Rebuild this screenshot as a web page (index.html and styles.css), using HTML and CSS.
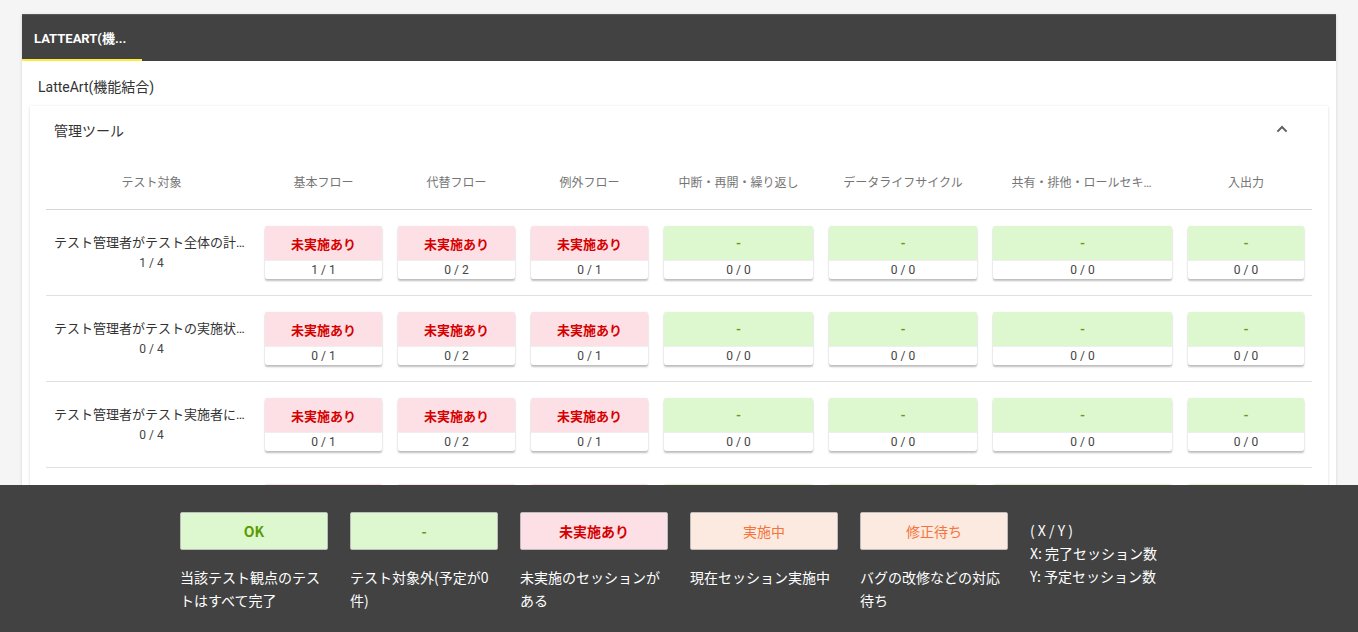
FILE: index.html
```html
<!DOCTYPE html>
<html lang="ja">
<head>
<meta charset="utf-8">
<title>LatteArt</title>
<link rel="stylesheet" href="styles.css">
</head>
<body>
<div class="page">
  <div class="card">
    <div class="tabbar">
      <div class="tab active">LATTEART(機...</div>
    </div>
    <div class="card-body">
      <div class="project-title">LatteArt(機能結合)</div>
      <div class="panel">
        <div class="panel-header">
          <span class="panel-title">管理ツール</span>
          <svg class="chevron" width="24" height="24" viewBox="0 0 24 24"><path d="M7.4 14.6 12 10l4.6 4.6" fill="none" stroke="#616161" stroke-width="2"/></svg>
        </div>
        <div class="table">
          <div class="row head">
            <div class="hcell"><span>テスト対象</span></div>
            <div class="hcell"><span>基本フロー</span></div>
            <div class="hcell"><span>代替フロー</span></div>
            <div class="hcell"><span>例外フロー</span></div>
            <div class="hcell"><span>中断・再開・繰り返し</span></div>
            <div class="hcell"><span>データライフサイクル</span></div>
            <div class="hcell"><span class="clip">共有・排他・ロールセキュリティ</span></div>
            <div class="hcell"><span>入出力</span></div>
          </div>

          <div class="row">
            <div class="title-cell"><div class="title">テスト管理者がテスト全体の計画を立てる</div><div class="count">1 / 4</div></div>
            <div class="cell"><div class="box"><div class="status ng">未実施あり</div><div class="ratio">1 / 1</div></div></div>
            <div class="cell"><div class="box"><div class="status ng">未実施あり</div><div class="ratio">0 / 2</div></div></div>
            <div class="cell"><div class="box"><div class="status ng">未実施あり</div><div class="ratio">0 / 1</div></div></div>
            <div class="cell"><div class="box"><div class="status na">-</div><div class="ratio">0 / 0</div></div></div>
            <div class="cell"><div class="box"><div class="status na">-</div><div class="ratio">0 / 0</div></div></div>
            <div class="cell"><div class="box"><div class="status na">-</div><div class="ratio">0 / 0</div></div></div>
            <div class="cell"><div class="box"><div class="status na">-</div><div class="ratio">0 / 0</div></div></div>
          </div>

          <div class="row">
            <div class="title-cell"><div class="title">テスト管理者がテストの実施状況を確認する</div><div class="count">0 / 4</div></div>
            <div class="cell"><div class="box"><div class="status ng">未実施あり</div><div class="ratio">0 / 1</div></div></div>
            <div class="cell"><div class="box"><div class="status ng">未実施あり</div><div class="ratio">0 / 2</div></div></div>
            <div class="cell"><div class="box"><div class="status ng">未実施あり</div><div class="ratio">0 / 1</div></div></div>
            <div class="cell"><div class="box"><div class="status na">-</div><div class="ratio">0 / 0</div></div></div>
            <div class="cell"><div class="box"><div class="status na">-</div><div class="ratio">0 / 0</div></div></div>
            <div class="cell"><div class="box"><div class="status na">-</div><div class="ratio">0 / 0</div></div></div>
            <div class="cell"><div class="box"><div class="status na">-</div><div class="ratio">0 / 0</div></div></div>
          </div>

          <div class="row">
            <div class="title-cell"><div class="title">テスト管理者がテスト実施者にテストを割り当てる</div><div class="count">0 / 4</div></div>
            <div class="cell"><div class="box"><div class="status ng">未実施あり</div><div class="ratio">0 / 1</div></div></div>
            <div class="cell"><div class="box"><div class="status ng">未実施あり</div><div class="ratio">0 / 2</div></div></div>
            <div class="cell"><div class="box"><div class="status ng">未実施あり</div><div class="ratio">0 / 1</div></div></div>
            <div class="cell"><div class="box"><div class="status na">-</div><div class="ratio">0 / 0</div></div></div>
            <div class="cell"><div class="box"><div class="status na">-</div><div class="ratio">0 / 0</div></div></div>
            <div class="cell"><div class="box"><div class="status na">-</div><div class="ratio">0 / 0</div></div></div>
            <div class="cell"><div class="box"><div class="status na">-</div><div class="ratio">0 / 0</div></div></div>
          </div>

          <div class="row">
            <div class="title-cell"><div class="title">テスト実施者がテストを実施する</div><div class="count">0 / 4</div></div>
            <div class="cell"><div class="box"><div class="status ng">未実施あり</div><div class="ratio">0 / 1</div></div></div>
            <div class="cell"><div class="box"><div class="status ng">未実施あり</div><div class="ratio">0 / 2</div></div></div>
            <div class="cell"><div class="box"><div class="status ng">未実施あり</div><div class="ratio">0 / 1</div></div></div>
            <div class="cell"><div class="box"><div class="status na">-</div><div class="ratio">0 / 0</div></div></div>
            <div class="cell"><div class="box"><div class="status na">-</div><div class="ratio">0 / 0</div></div></div>
            <div class="cell"><div class="box"><div class="status na">-</div><div class="ratio">0 / 0</div></div></div>
            <div class="cell"><div class="box"><div class="status na">-</div><div class="ratio">0 / 0</div></div></div>
          </div>
        </div>
      </div>
    </div>
  </div>
</div>

<footer class="legend">
  <div class="legend-item">
    <div class="legend-box ok">OK</div>
    <div class="legend-desc">当該テスト観点のテストはすべて完了</div>
  </div>
  <div class="legend-item">
    <div class="legend-box na">-</div>
    <div class="legend-desc">テスト対象外(予定が0件)</div>
  </div>
  <div class="legend-item">
    <div class="legend-box ng">未実施あり</div>
    <div class="legend-desc">未実施のセッションがある</div>
  </div>
  <div class="legend-item">
    <div class="legend-box doing">実施中</div>
    <div class="legend-desc">現在セッション実施中</div>
  </div>
  <div class="legend-item">
    <div class="legend-box doing">修正待ち</div>
    <div class="legend-desc">バグの改修などの対応待ち</div>
  </div>
  <div class="legend-note">
    <div>( X / Y )</div>
    <div>X: 完了セッション数</div>
    <div>Y: 予定セッション数</div>
  </div>
</footer>
</body>
</html>
```

FILE: styles.css
```css
* { box-sizing: border-box; }

html, body {
  margin: 0;
  padding: 0;
}

body {
  background: #f5f5f5;
  font-family: Roboto, "Noto Sans CJK JP", sans-serif;
  color: #333;
  overflow: hidden;
}

.page {
  padding: 14px 22px 0 22px;
}

.card {
  background: #fff;
  box-shadow: 0 1px 3px rgba(0,0,0,0.15);
  min-height: 700px;
}

.tabbar {
  height: 47px;
  background: #424242;
  display: flex;
  border-top: 1px solid #5a5a5a;
}

.tab {
  width: 120px;
  color: #fff;
  font-weight: 700;
  font-size: 13px;
  display: flex;
  align-items: center;
  padding-left: 12px;
  padding-top: 1px;
  border-bottom: 2px solid transparent;
}

.tab.active {
  border-bottom-color: #ffeb3b;
}

.card-body {
  padding: 0 8px;
}

.project-title {
  font-size: 14px;
  padding: 15px 8px 0 8px;
  height: 45px;
  color: #333;
}

.panel {
  background: #fff;
  box-shadow: 0 1px 3px rgba(0,0,0,0.12), 0 0 1px rgba(0,0,0,0.08);
  padding: 0 16px 40px 16px;
}

.panel-header {
  height: 48px;
  display: flex;
  align-items: center;
  justify-content: space-between;
  padding: 0 18px 0 8px;
}

.panel-title {
  font-size: 14px;
  color: #333;
}

.chevron {
  display: block;
  margin-top: -2px;
}

.row {
  display: grid;
  grid-template-columns: 211px 133px 133px 133px 165px 164px 195px 132px;
  border-bottom: 1px solid #e0e0e0;
}

.row.head {
  height: 56px;
  border-bottom: 1px solid #d6d6d6;
}

.hcell {
  display: flex;
  align-items: center;
  justify-content: center;
  font-size: 12px;
  color: #757575;
  padding: 0 8px;
  min-width: 0;
}

.hcell span {
  white-space: nowrap;
  overflow: hidden;
  text-overflow: ellipsis;
}

.hcell .clip {
  max-width: 142px;
}

.title-cell {
  padding: 23px 8px 0 8px;
  text-align: center;
  min-width: 0;
}

.title {
  font-size: 13px;
  color: #333;
  white-space: nowrap;
  overflow: hidden;
  text-overflow: ellipsis;
  line-height: 20px;
}

.count {
  font-size: 12px;
  color: #444;
  line-height: 20px;
}

.cell {
  padding: 16px 8px 16px 8px;
}

.box {
  border-radius: 2px;
  box-shadow: 0 2px 2px rgba(0,0,0,0.25), 0 0 1px rgba(0,0,0,0.15);
  overflow: hidden;
  background: #fff;
}

.status {
  height: 34px;
  display: flex;
  align-items: center;
  justify-content: center;
  font-size: 13px;
  font-weight: 700;
}

.status.ng {
  background: #fde0e6;
  color: #d50000;
}

.status.na {
  background: #ddf8cf;
  color: #6b9a12;
}

.ratio {
  height: 19px;
  font-size: 12px;
  color: #444;
  display: flex;
  align-items: center;
  justify-content: center;
  border-top: 1px solid #eee;
}

.legend {
  position: fixed;
  left: 0;
  right: 0;
  bottom: 0;
  height: 147px;
  background: #424242;
  display: flex;
  align-items: flex-start;
  padding: 27px 0 0 180px;
  gap: 22px;
  font-family: "Noto Sans CJK JP", sans-serif;
  color: #fff;
  z-index: 10;
}

.legend-item {
  width: 148px;
}

.legend-box {
  height: 38px;
  display: flex;
  align-items: center;
  justify-content: center;
  font-size: 14px;
  border: 1px solid #bdbdbd;
  border-radius: 2px;
}

.legend-box.ok {
  background: #ddf8cf;
  color: #5b9b00;
  font-weight: 700;
}

.legend-box.na {
  background: #ddf8cf;
  color: #6b9a12;
  font-weight: 700;
}

.legend-box.ng {
  background: #fde0e6;
  color: #d50000;
  font-weight: 700;
}

.legend-box.doing {
  background: #fce9e0;
  color: #f4753b;
}

.legend-desc {
  margin-top: 16px;
  font-size: 14px;
  line-height: 23px;
  color: #fff;
}

.legend-note {
  margin-top: 7px;
  font-size: 14px;
  line-height: 23px;
  color: #fff;
}
```
